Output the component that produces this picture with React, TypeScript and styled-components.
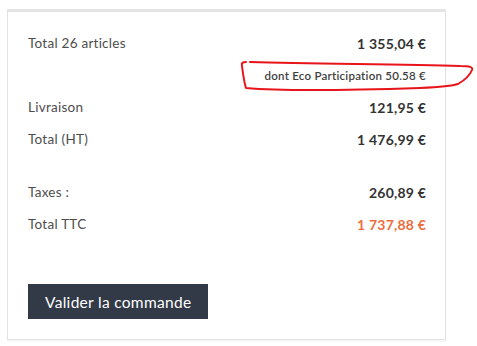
import React from "react";
import styled, { createGlobalStyle } from "styled-components";

const Global = createGlobalStyle`
  html, body { margin: 0; padding: 0; background: #fff; }
  body { font-family: "Lato", "Noto Sans", sans-serif; }
`;

const Page = styled.div`
  padding: 9px 0 0 7px;
  width: 477px;
  height: 346px;
  box-sizing: border-box;
  position: relative;
`;

const Card = styled.div`
  width: 439px;
  box-sizing: border-box;
  border: 1px solid #e2e2e2;
  border-top: 3px solid #e4e4e4;
  box-shadow: 0 2px 1px rgba(0, 0, 0, 0.03);
  padding: 15px 19px 20px 20px;
  background: #fff;
`;

const Row = styled.div<{ $gapTop?: number }>`
  display: flex;
  justify-content: space-between;
  align-items: center;
  height: 32px;
  margin-top: ${(p) => p.$gapTop ?? 0}px;
`;

const Label = styled.span`
  font-size: 13.5px;
  letter-spacing: 0.25px;
  color: #4d4d4d;
`;

const Value = styled.span<{ $accent?: boolean }>`
  font-size: 14px;
  letter-spacing: 0.2px;
  font-weight: 700;
  color: ${(p) => (p.$accent ? "#ee6d3e" : "#333")};
`;

const Note = styled.div`
  display: flex;
  justify-content: flex-end;
  align-items: center;
  height: 32px;
  font-size: 11.5px;
  letter-spacing: 0.25px;
  color: #3e3e3e;
  font-weight: 600;
`;

const Button = styled.button`
  margin-top: 44px;
  height: 35px;
  padding: 0 17px;
  border: none;
  background: #333a47;
  color: #fff;
  font-family: "Lato", "Noto Sans", sans-serif;
  font-size: 15.5px;
  letter-spacing: 0.3px;
  cursor: pointer;
`;

const Scribble = styled.svg`
  position: absolute;
  left: 0;
  top: 0;
  pointer-events: none;
`;

export default function App() {
  return (
    <Page>
      <Global />
      <Card>
        <Row>
          <Label>Total 26 articles</Label>
          <Value>1 355,04 €</Value>
        </Row>
        <Note>dont Eco Participation 50.58 €</Note>
        <Row>
          <Label>Livraison</Label>
          <Value>121,95 €</Value>
        </Row>
        <Row>
          <Label>Total (HT)</Label>
          <Value>1 476,99 €</Value>
        </Row>
        <Row $gapTop={21}>
          <Label>Taxes :</Label>
          <Value>260,89 €</Value>
        </Row>
        <Row>
          <Label>Total TTC</Label>
          <Value $accent>1 737,88 €</Value>
        </Row>
        <Button>Valider la commande</Button>
      </Card>
      <Scribble width="477" height="346" viewBox="0 0 477 346">
        <path
          d="M246 62 C243 62 241 63 242 66 C243 74 244 82 246 88 C290 92 360 90 420 88 C440 87 452 86 458 84 C465 80 470 75 472 70 C473 67 470 66 460 66 C400 64 320 64 250 62"
          fill="none"
          stroke="#e8141b"
          strokeWidth="2"
          strokeLinecap="round"
          strokeLinejoin="round"
        />
      </Scribble>
    </Page>
  );
}
